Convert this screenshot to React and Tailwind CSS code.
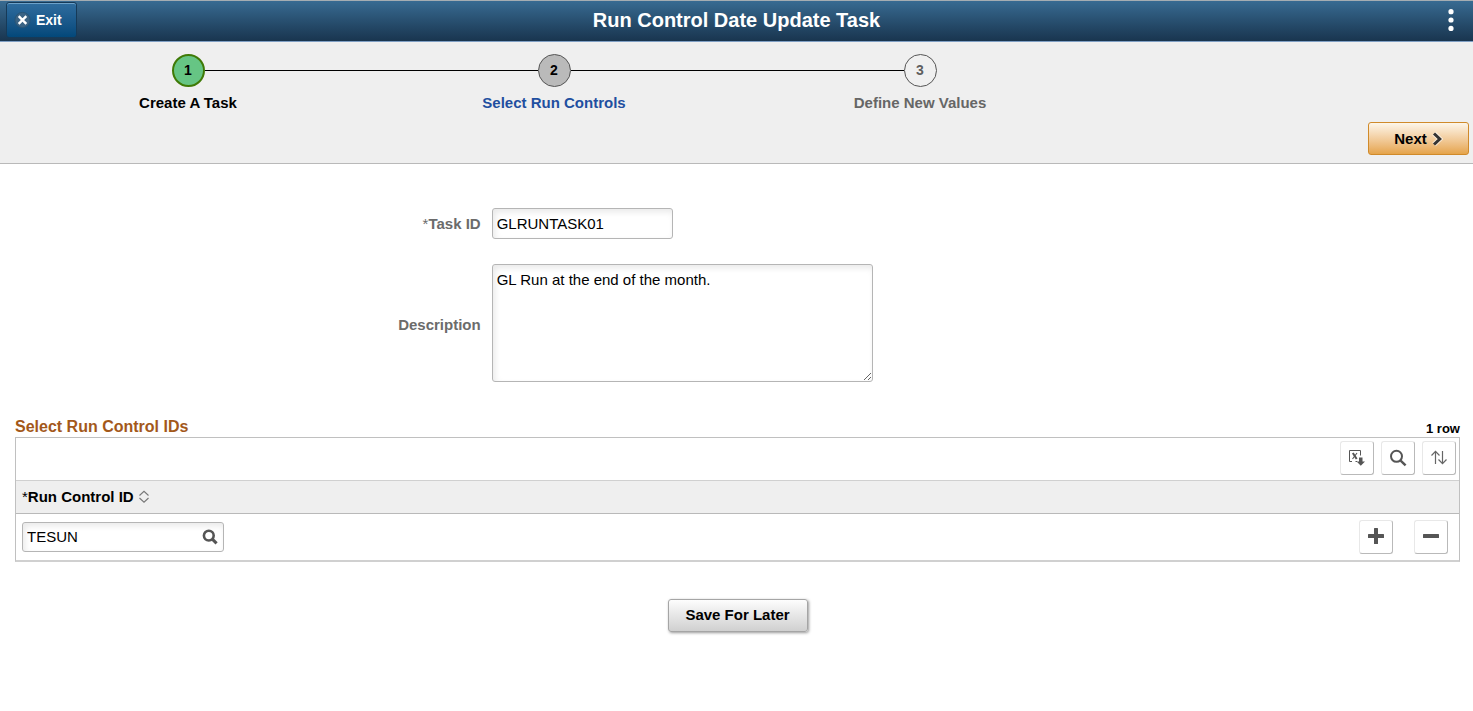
import React from 'react';

const steps = [
  { n: 1, label: 'Create A Task', circle: 'border-2 border-[#3f7a06] bg-[#66c584] text-black', text: 'text-black' },
  { n: 2, label: 'Select Run Controls', circle: 'border border-[#555] bg-[#bababa] text-black', text: 'text-[#1f4fa0]' },
  { n: 3, label: 'Define New Values', circle: 'border border-[#555] bg-[#f0f0f0] text-[#5f5f5f]', text: 'text-[#666]' },
];

const fieldStyle =
  'rounded-[3px] border border-[#b5b5b5] bg-white px-1 text-[15px] text-black shadow-[inset_2px_3px_6px_rgba(0,0,0,0.09)] outline-none';

function Header() {
  return (
    <header className="grid grid-cols-[1fr_auto_1fr] items-center border-t border-b border-t-[#a5adb2] border-b-[#7f9fc4] bg-linear-to-b from-[#386b92] to-[#19354f]">
      <div className="flex h-10 items-start pt-px pl-1.5">
        <button
          type="button"
          className="flex h-9 w-[71px] items-center rounded-[3px] border border-[#163a58] bg-linear-to-b from-[#2f6d9f] to-[#03487a] pl-[7px] text-[14px] font-bold text-white shadow-[inset_0_1px_0_#6da2ca]"
        >
          <svg viewBox="0 0 18 18" className="mr-1 size-[18px] shrink-0" aria-hidden="true">
            <circle cx="8.5" cy="9" r="7.6" fill="#3a6384" stroke="#285577" />
            <path d="M4.7 5.2l7.6 7.6M12.3 5.2l-7.6 7.6" stroke="#fff" strokeWidth="2.4" />
          </svg>
          Exit
        </button>
      </div>
      <h1 className="pb-0.5 text-[20px] leading-6 font-bold text-white">Run Control Date Update Task</h1>
      <div className="flex justify-end pr-3.5">
        <button type="button" aria-label="Actions" className="flex h-8 w-4 items-center justify-center">
          <svg viewBox="0 0 6 24" className="h-6 w-1.5 shrink-0" fill="#fff" aria-hidden="true">
            <circle cx="3" cy="2.7" r="2.6" />
            <circle cx="3" cy="11" r="2.6" />
            <circle cx="3" cy="19.4" r="2.6" />
          </svg>
        </button>
      </div>
    </header>
  );
}

function Steps() {
  return (
    <ol className="ml-[5px] grid max-w-[1098px] grid-cols-3">
      {steps.map((s, i) => (
        <li key={s.n} className="flex flex-col items-center">
          <div className="flex w-full items-center">
            <span className={i === 0 ? 'h-px flex-1' : 'h-px flex-1 bg-black'} />
            <span className={`flex size-[33px] items-center justify-center rounded-full text-[14px] font-bold ${s.circle}`}>
              {s.n}
            </span>
            <span className={i === 2 ? 'h-px flex-1' : 'h-px flex-1 bg-black'} />
          </div>
          <a href="#" className={`mt-[6px] text-[15px] leading-5 font-bold ${s.text}`}>
            {s.label}
          </a>
        </li>
      ))}
    </ol>
  );
}

function IconButton({ label, children }) {
  return (
    <button
      type="button"
      aria-label={label}
      className="flex size-[34px] items-center justify-center rounded-[3px] border border-t-[#e8e8e8] border-r-[#b9b9b9] border-b-[#b9b9b9] border-l-[#e8e8e8] bg-white text-[#555]"
    >
      {children}
    </button>
  );
}

function RunControlGrid() {
  return (
    <section className="mt-[35px] mr-[13px] ml-[15px]">
      <div className="flex items-end justify-between">
        <h2 className="text-[16px] leading-5 font-bold text-[#a3581a]">Select Run Control IDs</h2>
        <span className="text-[13px] leading-4 font-bold text-black">1 row</span>
      </div>
      <div className="border border-b-2 border-[#c0c0c0] border-b-[#d0d0d0]">
        <div className="flex h-[42px] justify-end gap-[7px] pt-[3px] pr-[3px]">
          <IconButton label="Export to Excel">
            <svg viewBox="0 0 18 18" className="size-[18px]" fill="none" aria-hidden="true">
              <path d="M4 12.5H1.5V1.5H12.5V6.5M9 12.500H7.5" stroke="#555" />
              <path d="M4.8 4l3.9 6" stroke="#555" strokeWidth="2" />
              <path d="M9 4L4.500 10" stroke="#555" strokeWidth="1.1" />
              <path d="M11 8.500h3.500v4H17L12.800 16.700 8.600 12.500H11z" fill="#555" />
            </svg>
          </IconButton>
          <IconButton label="Find">
            <svg viewBox="0 0 18 18" className="size-[18px]" fill="none" stroke="#555" aria-hidden="true">
              <circle cx="7.5" cy="7.3" r="5.5" strokeWidth="2" />
              <path d="M11.6 11.6l5 4.8" strokeWidth="2.4" />
            </svg>
          </IconButton>
          <IconButton label="Sort">
            <svg viewBox="0 0 18 18" className="size-[18px]" fill="none" stroke="#666" strokeWidth="1.2" aria-hidden="true">
              <path d="M5.5 15V2.5M1.5 6.5l4-4.2 4 4.2" />
              <path d="M12.5 2V14.5M8.5 10.500l4 4.200 4-4.200" />
            </svg>
          </IconButton>
        </div>
        <table className="w-full border-collapse">
          <thead>
            <tr className="h-[33px] border-t border-b border-t-[#d0d0d0] border-b-[#b9b9b9] bg-[#efefef]">
              <th scope="col" colSpan={2} className="py-0 pl-1.5 text-left text-[15px] leading-5 font-bold text-black">
                <button type="button" className="flex items-center">
                  <span className="font-normal">*</span>Run Control ID
                  <svg viewBox="0 0 12 14" className="ml-1 h-3.5 w-3" fill="none" stroke="#777" strokeWidth="1.1" aria-hidden="true">
                    <path d="M1.5 5.5L6 1.3l4.5 4.2M1.5 8L6 12.2l4.5-4.2" />
                  </svg>
                </button>
              </th>
            </tr>
          </thead>
          <tbody>
            <tr className="h-[46px]">
              <td className="p-0 pl-1.5">
                <div className={`flex h-[30px] w-[202px] items-center ${fieldStyle}`}>
                  <input
                    aria-label="Run Control ID"
                    defaultValue="TESUN"
                    className="min-w-0 flex-1 bg-transparent text-[15px] leading-5 outline-none"
                  />
                  <button type="button" aria-label="Look up Run Control ID" className="mr-px">
                    <svg viewBox="0 0 16 16" className="size-4" fill="none" stroke="#555" aria-hidden="true">
                      <circle cx="6.800" cy="6.600" r="4.900" strokeWidth="2.600" />
                      <path d="M10.300 10.100l4.300 4.300" strokeWidth="3" />
                    </svg>
                  </button>
                </div>
              </td>
              <td className="p-0 pr-[11px]">
                <div className="flex justify-end gap-[21px]">
                  <IconButton label="Add row">
                    <svg viewBox="0 0 18 18" className="size-[18px]" fill="#555" aria-hidden="true">
                      <rect x="1" y="6" width="16" height="4" rx="0.5" />
                      <rect x="7" y="0" width="4" height="16" rx="0.5" />
                    </svg>
                  </IconButton>
                  <IconButton label="Delete row">
                    <svg viewBox="0 0 18 18" className="size-[18px]" fill="#555" aria-hidden="true">
                      <rect x="1" y="6" width="16" height="4" rx="0.5" />
                    </svg>
                  </IconButton>
                </div>
              </td>
            </tr>
          </tbody>
        </table>
      </div>
    </section>
  );
}

export default function App() {
  return (
    <div className="min-h-screen bg-white font-['Liberation_Sans',Arial,sans-serif]">
      <Header />
      <div className="border-b border-[#b9b9b9] bg-[#efefef] pt-3 pb-2">
        <Steps />
        <div className="mt-[9px] flex justify-end pr-1">
          <button
            type="button"
            className="flex h-[33px] w-[101px] items-center justify-center gap-1 rounded-[3px] border border-[#d08a2a] bg-linear-to-b from-[#fdf6ea] to-[#e5a44a] pt-0.5 text-[15px] font-bold text-black"
          >
            Next
            <svg viewBox="0 0 12 16" className="h-4 w-3" fill="none" aria-hidden="true">
              <path d="M3 1.500L8.800 7L3 12.500" stroke="#fff" strokeOpacity="0.6" strokeWidth="5" />
              <path d="M3 1.500L8.800 7L3 12.500" stroke="#333" strokeWidth="3" />
            </svg>
          </button>
        </div>
      </div>

      <main>
        <form className="mt-11 grid grid-cols-[1fr_2fr] items-center gap-x-px gap-y-[25px]">
          <label htmlFor="task-id" className="pr-2.5 text-right text-[15px] leading-5 font-bold text-[#6b6b6b]">
            <span className="font-normal">*</span>Task ID
          </label>
          <input id="task-id" defaultValue="GLRUNTASK01" className={`h-[31px] w-[181px] ${fieldStyle}`} />
          <label htmlFor="description" className="pt-1 pr-2.5 text-right text-[15px] leading-5 font-bold text-[#6b6b6b]">
            Description
          </label>
          <textarea
            id="description"
            defaultValue="GL Run at the end of the month."
            className={`block h-[118px] w-[381px] resize py-[5px] leading-5 ${fieldStyle}`}
          />
        </form>

        <RunControlGrid />

        <div className="mt-[37px] flex justify-center pl-0.5">
          <button
            type="button"
            className="h-[33px] w-[140px] rounded-[3px] border border-[#a5a5a5] bg-linear-to-b from-[#fdfdfd] to-[#d0d0d0] text-[15px] font-bold text-black shadow-[1px_1px_3px_rgba(0,0,0,0.4)]"
          >
            Save For Later
          </button>
        </div>
      </main>
    </div>
  );
}
